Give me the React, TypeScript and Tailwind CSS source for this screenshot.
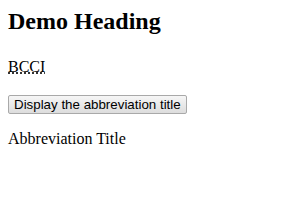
export default function App() {
  return (
    <div className="w-[300px] h-[210px] bg-white px-2 text-black" style={{ fontFamily: '"Liberation Serif", serif' }}>
      <h2 className="pt-[7px] text-[24px] leading-[28px] font-bold">Demo Heading</h2>
      <div className="mt-[23px] text-[16px] leading-[18px]">
        <abbr title="Board of Control for Cricket in India" className="underline decoration-dotted">BCCI</abbr>
      </div>
      <button
        className="mt-[19px] h-[19px] px-[5px] text-[13.33px] leading-[16px] border border-[#a9a9a9] rounded-[2px] bg-gradient-to-b from-[#f6f6f6] to-[#dddddd] text-black"
        style={{ fontFamily: '"Liberation Sans", Arial, sans-serif' }}
      >
        Display the abbreviation title
      </button>
      <p className="mt-[14px] text-[16px] leading-[18px]">Abbreviation Title</p>
    </div>
  );
}
